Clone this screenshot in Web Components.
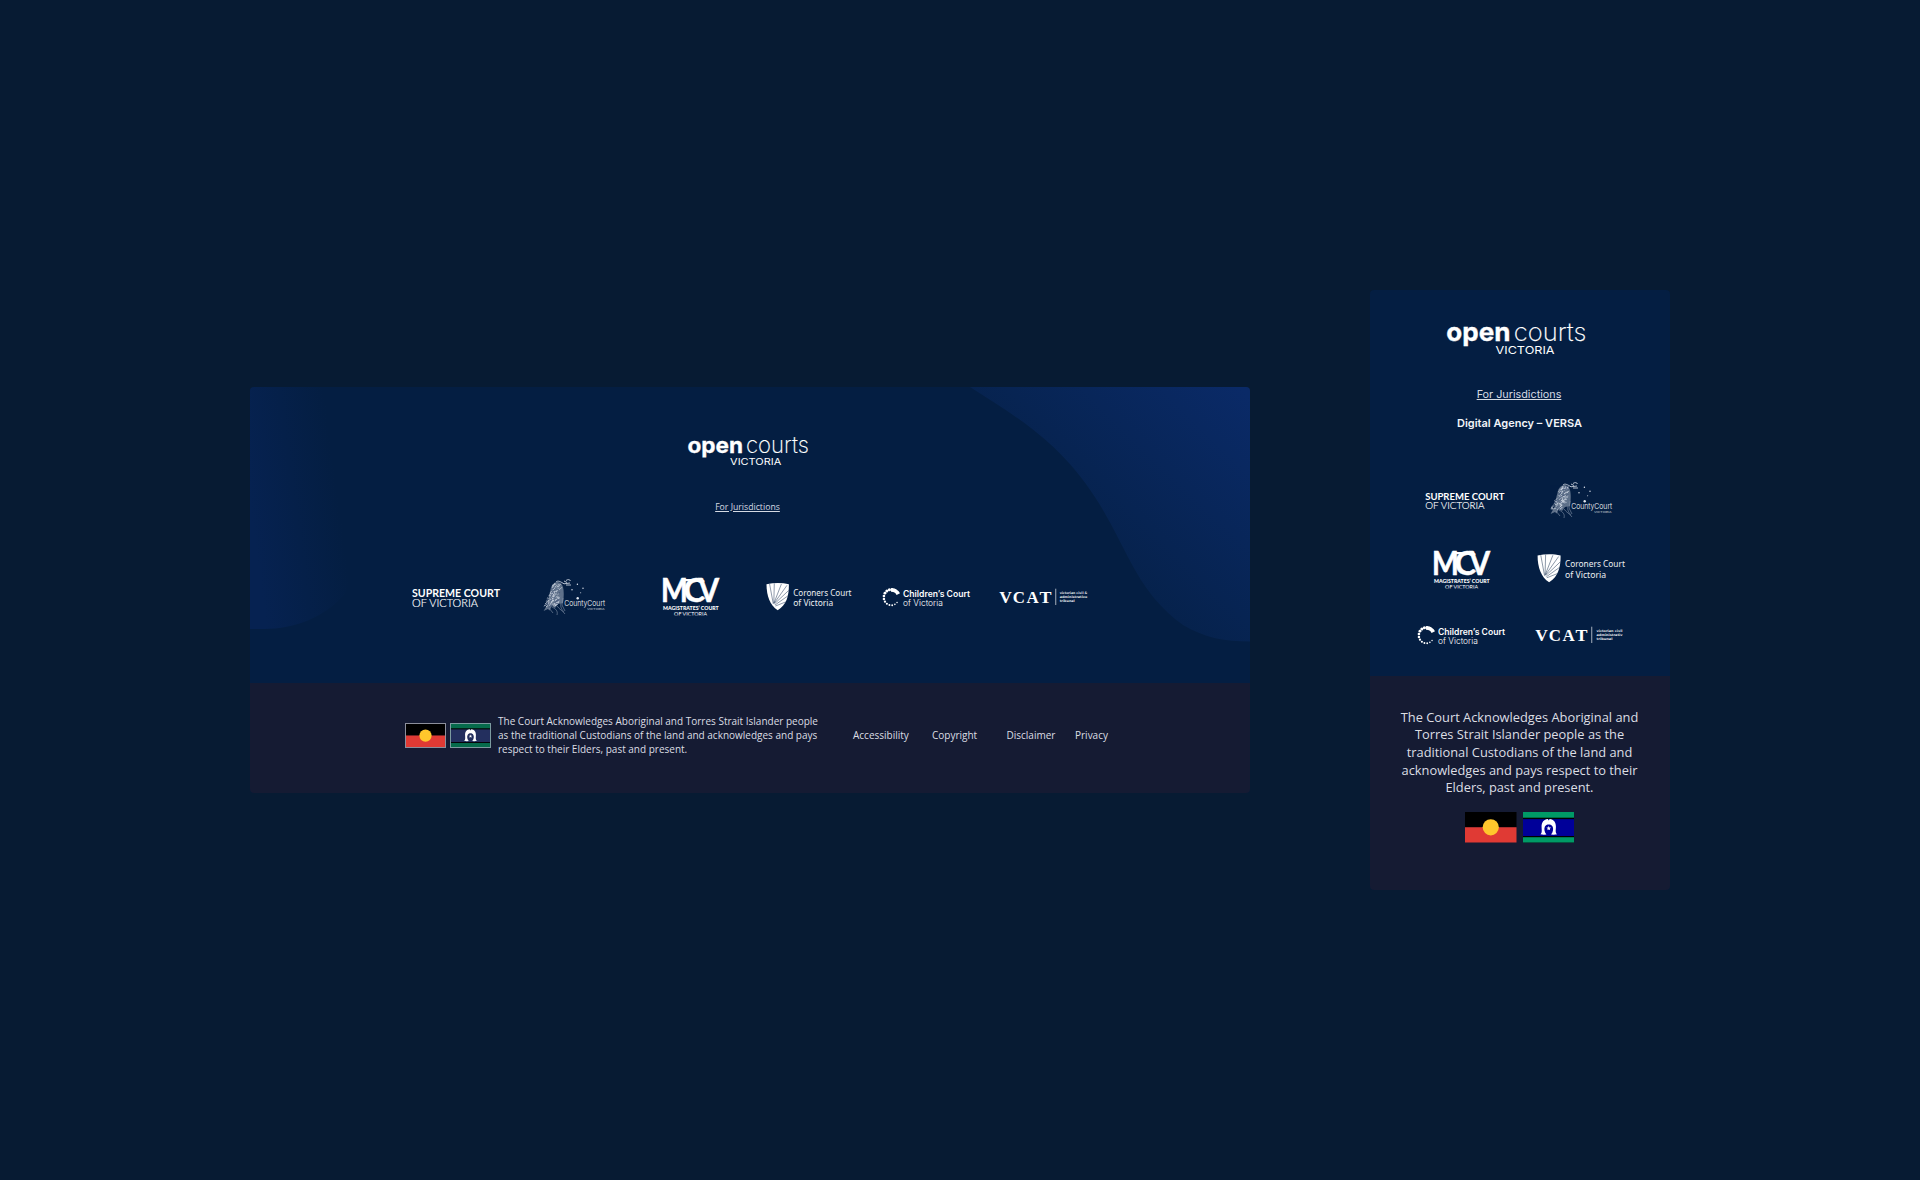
<!DOCTYPE html>
<html lang="en">
<head>
<meta charset="utf-8">
<title>Open Courts Victoria</title>
<style>
html,body{margin:0;height:100%}
body{background:#071b33;font-family:"Open Sans",sans-serif;color:#fff}
</style>
</head>
<body>
<footer-showcase></footer-showcase>
<script>
const define = (name, html) => customElements.define(name, class extends HTMLElement {
  constructor() {
    super();
    this.attachShadow({ mode: 'open' }).innerHTML = typeof html === 'function' ? html(this) : html;
  }
});
const t = (txt, x, y, size, len, attrs = '') =>
  `<text x="${x}" y="${y}" font-size="${size}" textLength="${len}" lengthAdjust="spacingAndGlyphs" ${attrs}>${txt}</text>`;

define('open-courts-logo', `
<style>:host{display:block;width:121px;height:32px}svg{display:block;width:100%;height:100%;overflow:visible;fill:#fff}</style>
<svg viewBox="0 0 121 32">
${t('open', -0.6, 19.3, 22.2, 55.6, 'font-family="Inter" font-weight="700" stroke="#fff" stroke-width=".3"')}
${t('courts', 58, 19.3, 22.2, 62.8, 'font-family="Inter" font-weight="200" stroke="#fff" stroke-width=".15"')}
${t('VICTORIA', 42.1, 30.5, 9.3, 51.2, 'font-family="Inter" font-weight="400"')}
</svg>`);

const rand = (() => { let s = 7; return () => (s = (s * 16807) % 2147483647) / 2147483647; })();
const feathers = () => {
  let out = '';
  for (let i = 0; i < 130; i++) {
    const v = rand(), y = 6 + v * 23, x = 28.5 - v * 7 + (rand() - .5) * (9 + v * 5);
    out += `<path stroke="${i % 4 ? '#e2e8f1' : '#41537a'}" d="M${x.toFixed(1)} ${y.toFixed(1)}l${(-.6 - rand()).toFixed(1)} ${(.6 + rand() * 1.2).toFixed(1)}"/>`;
  }
  return out;
};

const logos = {
  supreme: () => `
    ${t('SUPREME COURT', 0, 20.4, 11.2, 88, 'font-family="Lato" font-weight="700"')}
    ${t('OF VICTORIA', 0, 30.2, 11, 66, 'font-family="Lato" font-weight="300" stroke="#fff" stroke-width=".15"')}`,
  county: () => `
    <path d="M27 5C23 6 21 9 20.5 13C19 17 19 21 18 25C17 29 15 31 13.6 34L18 32L19.5 33.5L22 29L25 31L28 27L33 26C34 20 34 14 33 10C32 7 30 4.5 27 5Z" fill="#b9c3d2" opacity=".5"/>
    <g stroke-width=".8" opacity=".85">${feathers()}</g>
    <g fill="none" stroke="#c8d0dc" stroke-width=".9"><path d="M26 5C28 3 31 5 34 6.8L40 6M34 4L37 5.5M36 3.5C38 2 40 2.5 40.5 4M36 8H41"/></g>
    <g fill="none" stroke="#8593aa" stroke-width=".6"><path d="M22 30C26 32 28 34 27 38M27 29C29 32 33 34 35 37M31 26C30 30 32 33 34 35M19 31L23 36M33 21L32 28L35 34"/></g>
    <g fill="#e4e9f1"><circle cx="42" cy="12.7" r=".7"/><circle cx="47.4" cy="7.2" r=".7"/><circle cx="53" cy="11.3" r=".7"/><circle cx="50.7" cy="15.7" r=".5"/><circle cx="47.7" cy="21.2" r="1.2"/></g>
    ${t('CountyCourt', 34.2, 29.4, 7.6, 40.8, 'font-family="Inter" font-weight="300"')}
    ${t('VICTORIA', 57, 33, 2.4, 17.6, 'font-family="Inter" opacity=".75"')}`,
  mcv: () => `
    ${t('M', 13.9, 24.6, 31.6, 26.8, 'font-family="Lato" font-weight="700" stroke="#fff" stroke-width=".6"')}
    ${t('C', 36.4, 24.6, 31.6, 21.6, 'font-family="Lato" font-weight="700" stroke="#fff" stroke-width=".4"')}
    ${t('V', 51.6, 24.6, 31.6, 20.6, 'font-family="Lato" font-weight="700" stroke="#fff" stroke-width=".6"')}
    <path d="M37 1.9H56V4.2H38Z"/>
    ${t('MAGISTRATES’ COURT', 16.1, 32.6, 5.6, 55.6, 'font-family="Lato" font-weight="900"')}
    <clipPath id="c"><path d="M0 30H88V38.4H0Z"/></clipPath>
    ${t('OF VICTORIA', 27.1, 38.7, 5.2, 33, 'font-family="Lato" clip-path="url(#c)"')}`,
  coroners: () => `
    <path d="M1.5 7.3C9 5.6 17 5.6 23.9 7.3C24 19 21.5 28 12.7 33.3C5 28.5 1.5 19 1.5 7.3Z"/>
    <g stroke="#041e42" stroke-width=".45" fill="none"><path d="M8.3 27L4.6 7M8.8 26L9.3 6.5M9 26L16.4 7M9 26.5L22 8.3M9.3 27L23.6 13.5M10 28L23 18.8M10.5 29L20.5 25"/></g>
    ${t('Coroners Court', 28.2, 18.7, 9, 58.3, 'font-family="Noto Sans" opacity=".93"')}
    ${t('of Victoria', 28.2, 28.9, 9, 40, 'font-family="Noto Sans" opacity=".93"')}`,
  children: () => {
    let dots = '';
    // Bead sizes shrink counter-clockwise from the thick arc at the top right.
    for (let i = 0; i < 13; i++) {
      const a = (-62 - i * 21.5) * Math.PI / 180, r = 1.75 - i * .085;
      dots += `<circle cx="${(9.3 + 7.5 * Math.cos(a)).toFixed(2)}" cy="${(20.4 + 7.9 * Math.sin(a)).toFixed(2)}" r="${r.toFixed(2)}"/>`;
    }
    return `${dots}<path d="M9 11.2C13 10.9 16.6 13 18 16.2L14.6 18C13.6 15.8 11.6 14.7 9 14.8Z"/>
    ${t('Children’s Court', 21, 19.6, 8.6, 67, 'font-family="Inter" font-weight="600"')}
    ${t('of Victoria', 21, 28.7, 8.6, 39.8, 'font-family="Inter" font-weight="300"')}`;
  },
  vcat: () => `
    <g font-family="Liberation Serif" font-weight="700">${t('V', -0.8, 25.6, 17, 12.6)}${t('C', 12.7, 25.6, 17, 12.2)}${t('A', 26.4, 25.6, 17, 12.2)}${t('T', 39.6, 25.6, 17, 12)}</g>
    <rect x="55.4" y="11.7" width=".8" height="16.3" opacity=".8"/>
    <g font-family="DejaVu Sans" font-weight="700" opacity=".9">
    ${t('victorian civil &amp;', 59.7, 16.9, 3.3, 27.6)}${t('administrative', 59.7, 21.1, 3.3, 27.6)}${t('tribunal', 59.7, 25.2, 3.3, 15)}</g>`,
  vcatCropped: () => logos.vcat().replace(/<g font-family="DejaVu[\s\S]*<\/g>/, `<g font-family="DejaVu Sans" font-weight="700" opacity=".9">
    ${t('victorian civil', 60.5, 16.9, 3.3, 26)}${t('administrativ', 60.5, 21.1, 3.3, 26)}${t('tribunal', 60.5, 25.2, 3.3, 16)}</g>`)
};
define('court-logo', el => `
<style>:host{display:block;width:88px;height:40px}svg{display:block;width:100%;height:100%;overflow:visible;fill:#fff}</style>
<svg viewBox="0 0 88 40">${logos[el.getAttribute('name')]()}</svg>`);

define('nation-flag', el => {
  const torres = el.getAttribute('kind') === 'torres', muted = el.hasAttribute('muted');
  const green = muted ? '#066b4c' : '#009a66', blue = muted ? '#232f5e' : '#000099';
  const art = torres ? `
    <rect width="51" height="30" fill="#000"/><rect width="51" height="5.6" fill="${green}"/><rect y="24.8" width="51" height="5.2" fill="${green}"/>
    <rect y="7" width="51" height="16.6" fill="${blue}"/>
    <path fill="#fff" d="M25.5 8.4L24.6 7C20.6 7.2 18.3 10.5 18.4 14.5C18.5 18 19.2 20.4 17.2 22L20.6 22.4L23.2 22.2C21 19.5 20.8 16.5 21.6 14.6C22.4 12.8 23.8 12.2 25.5 12.2C27.2 12.2 28.6 12.8 29.4 14.6C30.2 16.5 30 19.5 27.8 22.2L30.4 22.4L33.8 22C31.8 20.4 32.5 18 32.6 14.5C32.7 10.5 30.4 7.2 26.4 7Z"/>
    <path fill="#fff" d="M25.5 13.6L26.1 15.2L27.8 15.3L26.5 16.4L26.9 18L25.5 17.1L24.1 18L24.5 16.4L23.2 15.3L24.9 15.2Z"/>` : `
    <rect width="51" height="15.2" fill="#000"/><rect y="15" width="51" height="15" fill="#e03a34"/><circle cx="25.5" cy="15.1" r="8" fill="#ffc72c"/>`;
  return `<style>:host{display:block;box-sizing:border-box;overflow:hidden}svg{display:block;width:100%;height:100%}
  :host([muted]){border:1px solid ${torres ? '#7c9ba0' : '#8c8f9c'}}</style><svg viewBox="0 0 51 30" preserveAspectRatio="none">${art}</svg>`;
});

define('desktop-footer', `
<style>
:host{display:block;position:relative;width:1000px;height:405.5px;margin-top:-.5px;border-radius:4px;overflow:hidden;background:#041e42}
.bg{position:absolute;inset:0;width:1000px;height:296px}
.top{position:relative;height:295.5px;display:flex;flex-direction:column;align-items:center;padding-top:46.5px;box-sizing:border-box}
open-courts-logo{margin-right:4px}
a{color:#d5dae3;font-size:8.7px;line-height:12px;margin-top:35px;margin-right:5px;text-decoration:underline;text-underline-offset:1px;text-decoration-thickness:.8px;white-space:nowrap}
.row{display:grid;grid-template-columns:repeat(6,117.6px);justify-items:center;margin-top:64px}
.bottom{position:relative;height:110px;background:#151b33;display:flex;align-items:flex-start;padding:31.5px 0 0 155px;box-sizing:border-box;color:#dcdee4;font-size:10px;line-height:14px}
nation-flag{width:41px;height:25px;margin:8.5px 4px 0 0}
p{margin:0 0 0 3px;white-space:nowrap;width:355px}
nav{display:flex;padding-top:14px}
nav span{white-space:nowrap}
</style>
<svg class="bg" viewBox="0 0 1000 296"><defs>
<linearGradient id="l" gradientUnits="userSpaceOnUse" x1="0" y1="120" x2="88" y2="108"><stop offset="0" stop-color="#062251"/><stop offset="1" stop-color="#062251" stop-opacity="0"/></linearGradient>
<linearGradient id="r" gradientUnits="userSpaceOnUse" x1="850" y1="165" x2="1000" y2="10"><stop offset="0" stop-color="#06224c"/><stop offset="1" stop-color="#0a2a67"/></linearGradient></defs>
<path fill="url(#l)" d="M0 0H150C112 70 112 170 95 207C75 230 45 242 14 242H0Z"/>
<path fill="url(#r)" d="M720 0C770 32 812 56 850 118C880 168 888 205 933 238C955 251 975 254.5 1000 254.5V0Z"/></svg>
<div class="top"><open-courts-logo></open-courts-logo><a>For Jurisdictions</a>
<div class="row"><court-logo name="supreme"></court-logo><court-logo name="county"></court-logo><court-logo name="mcv"></court-logo><court-logo name="coroners"></court-logo><court-logo name="children"></court-logo><court-logo name="vcat"></court-logo></div></div>
<div class="bottom"><nation-flag kind="aboriginal" muted></nation-flag><nation-flag kind="torres" muted></nation-flag>
<p>The Court Acknowledges Aboriginal and Torres Strait Islander people<br>as the traditional Custodians of the land and acknowledges and pays<br>respect to their Elders, past and present.</p>
<nav><span style="width:79px">Accessibility</span><span style="width:74.5px">Copyright</span><span style="width:68.5px">Disclaimer</span><span>Privacy</span></nav></div>`);

define('mobile-footer', `
<style>
:host{display:block;width:300px;height:600px;border-radius:4px;overflow:hidden;background:#041e42}
.top{height:385.5px;display:flex;flex-direction:column;align-items:center;padding-top:28.5px;box-sizing:border-box}
open-courts-logo{width:139.5px;height:37px;margin-right:6px}
a,b{font-family:Inter,sans-serif;white-space:nowrap;line-height:16px}
a{color:#d5dae3;font-size:10.8px;margin-top:31px;margin-right:2px;text-decoration:underline;text-underline-offset:1px;text-decoration-thickness:1px}
b{font-size:11px;font-weight:600;margin-top:12px;margin-right:1px;color:#f2f4f8}
.grid{display:grid;grid-template-columns:119.5px 119.5px;grid-template-rows:69px 69px 64px;align-items:center;justify-items:center;margin-top:34.5px;width:239px;padding-left:2px}
.s{width:79.5px;height:36px;margin-left:6px}.c{width:90.5px;height:41.1px}.m{margin-top:2px;margin-left:1px}.v{margin-right:1px}
.bottom{height:214.5px;background:#151b33;display:flex;flex-direction:column;align-items:center;padding:33px 1px 0 0;box-sizing:border-box}
p{margin:0;text-align:center;font-size:12.83px;line-height:17.67px;color:#dcdee4;white-space:nowrap}
.flags{display:flex;gap:6px;margin-top:15.5px}
nation-flag{width:51.5px;height:30.5px}
</style>
<div class="top"><open-courts-logo></open-courts-logo><a>For Jurisdictions</a><b>Digital Agency – VERSA</b>
<div class="grid"><court-logo class="s" name="supreme"></court-logo><court-logo name="county"></court-logo><court-logo class="m" name="mcv"></court-logo><court-logo class="c" name="coroners"></court-logo><court-logo name="children"></court-logo><court-logo class="v" name="vcatCropped"></court-logo></div></div>
<div class="bottom"><p>The Court Acknowledges Aboriginal and<br>Torres Strait Islander people as the<br>traditional Custodians of the land and<br>acknowledges and pays respect to their<br>Elders, past and present.</p>
<div class="flags"><nation-flag kind="aboriginal"></nation-flag><nation-flag kind="torres"></nation-flag></div></div>`);

define('footer-showcase', `
<style>:host{display:flex;align-items:center;gap:120px;box-sizing:border-box;height:1180px;padding-left:250px}</style>
<desktop-footer></desktop-footer><mobile-footer></mobile-footer>`);
</script>
</body>
</html>
